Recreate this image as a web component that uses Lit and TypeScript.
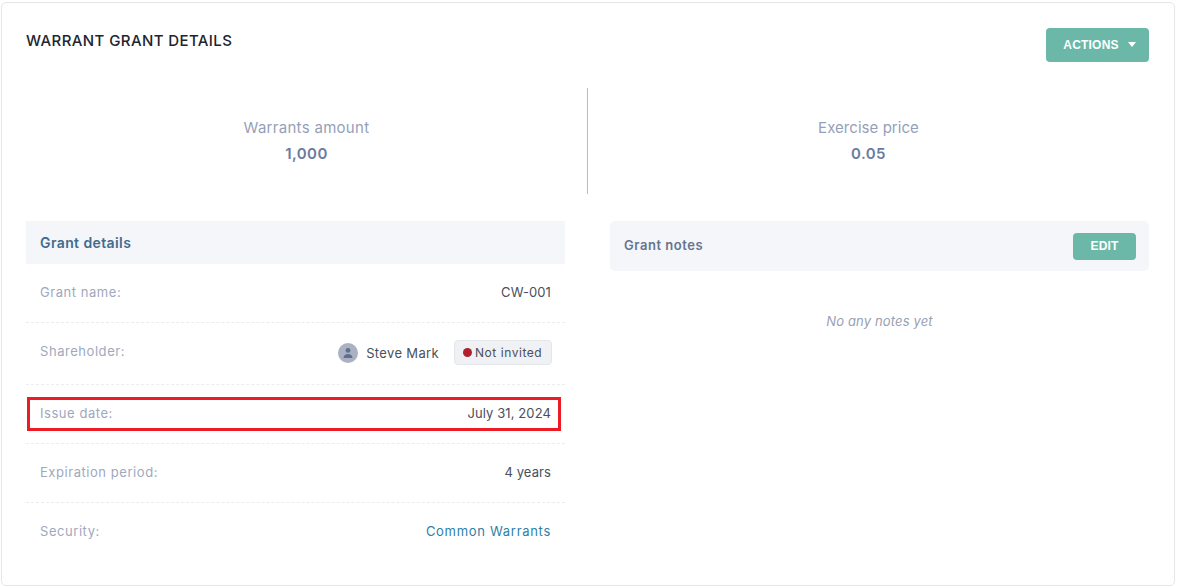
import { LitElement, html, css } from "lit";
import { customElement } from "lit/decorators.js";

@customElement("app-root")
export class AppRoot extends LitElement {
  static styles = css`
    :host { display: block; height: 587px; box-sizing: border-box; padding: 2px 2px 1px 1px; background: #fff;
      font-family: Inter, "Liberation Sans", sans-serif; font-size: 13px; color: #4a4f5c; }
    .card { box-sizing: border-box; width: 1174px; height: 584px; border: 1px solid #e4e6e9; border-radius: 5px; padding: 25px 25px 0 24px; background: #fff; }
    .head { display: flex; justify-content: space-between; align-items: flex-start; height: 60px; }
    h1 { margin: 4px 0 0 0; font-size: 15px; line-height: 18px; font-weight: 500; color: #20242e; letter-spacing: 0.4px; }
    .btn { border: 0; background: #6bb8a9; color: #fff; border-radius: 4px; font-family: "Liberation Sans", sans-serif; font-weight: 700; font-size: 12px; letter-spacing: 0.2px; display: flex; align-items: center; justify-content: center; padding: 0; }
    .actions { width: 103px; height: 34px; gap: 9px; padding-left: 4px; }
    .caret { width: 0; height: 0; border-left: 4.5px solid transparent; border-right: 4.5px solid transparent; border-top: 5px solid #fff; margin-top: -2px; }
    .stats { display: grid; grid-template-columns: 561px 1fr; height: 106px; }
    .stat { display: flex; flex-direction: column; align-items: center; padding-top: 31px; gap: 8px; }
    .stat + .stat { border-left: 1px solid #b8bdc4; }
    .stat .k { font-size: 15px; line-height: 18px; letter-spacing: 0.3px; color: #959fb8; }
    .stat + .stat .k { letter-spacing: 0.05px; }
    .stat .v { font-size: 15px; line-height: 18px; letter-spacing: 0.4px; font-weight: 600; color: #6b7b9f; }
    .cols { display: grid; grid-template-columns: 539px 539px; column-gap: 45px; margin-top: 27px; align-items: start; }
    .dh { height: 43px; box-sizing: border-box; padding: 0 0 1px 14px; background: #f4f6fa; display: flex; align-items: center; font-size: 14px; letter-spacing: 0.4px; font-weight: 600; color: #3f6d8e; }
    .row { position: relative; display: flex; justify-content: space-between; align-items: center; padding: 0 14px 2px; box-sizing: content-box; height: 56px; border-bottom: 1px dashed #ebecef; font-size: 13px; }
    .row.tall { height: 56px; padding-bottom: 5px; }
    .row.last { border-bottom: 0; }
    .lab { color: #a0a8bd; letter-spacing: 0.55px; }
    .val { color: #4a4f5c; letter-spacing: 0.1px; }
    .link { color: #2f7fa8; letter-spacing: 0.7px; }
    .who { display: flex; align-items: center; margin: 3px -1px 0 0; }
    .avatar { width: 20px; height: 20px; border-radius: 50%; background: #a9b1c3; display: flex; align-items: center; justify-content: center; margin-right: 8px; }
    .name { margin-right: 15px; letter-spacing: 0.35px; }
    .badge { display: flex; align-items: center; gap: 3px; height: 25px; box-sizing: border-box; width: 98px; padding-left: 8px; background: #f0f1f4; border: 1px solid #e4e6ea; border-radius: 4px; font-size: 12px; letter-spacing: 0.55px; }
    .dot { width: 9px; height: 9px; border-radius: 50%; background: #b0202a; }
    .mark { position: absolute; left: 1px; right: 4px; top: 12px; height: 34px; box-sizing: border-box; border: 3px solid #ed1c24; }
    .nh { height: 50px; background: #f4f6fa; border-radius: 5px; display: flex; justify-content: space-between; align-items: center; padding: 0 13px 0 14px; font-weight: 600; letter-spacing: 0.55px; color: #66748f; }
    .nh > span { margin-top: -2px; }
    .edit { width: 63px; height: 27px; }
    .empty { text-align: center; margin-top: 41px; line-height: 18px; font-style: italic; letter-spacing: 0.15px; color: #98a1b5; }
  `;

  render() {
    return html`
      <div class="card">
        <div class="head">
          <h1>WARRANT GRANT DETAILS</h1>
          <button class="btn actions">ACTIONS <span class="caret"></span></button>
        </div>
        <div class="stats">
          <div class="stat"><span class="k">Warrants amount</span><span class="v">1,000</span></div>
          <div class="stat"><span class="k">Exercise price</span><span class="v">0.05</span></div>
        </div>
        <div class="cols">
          <section>
            <div class="dh">Grant details</div>
            <div class="row"><span class="lab">Grant name:</span><span class="val">CW-001</span></div>
            <div class="row tall"><span class="lab">Shareholder:</span>
              <span class="who">
                <span class="avatar"><svg width="12" height="12" viewBox="0 0 12 12"><circle cx="6" cy="3.4" r="2.4" fill="#5f6f8f"/><path d="M1.5 11c0-2.8 2-4 4.5-4s4.500 1.200 4.500 4z" fill="#5f6f8f"/></svg></span>
                <span class="name val">Steve Mark</span>
                <span class="badge val"><span class="dot"></span>Not invited</span>
              </span>
            </div>
            <div class="row"><span class="lab">Issue date:</span><span class="val">July 31, 2024</span><span class="mark"></span></div>
            <div class="row"><span class="lab">Expiration period:</span><span class="val">4 years</span></div>
            <div class="row last"><span class="lab">Security:</span><span class="link">Common Warrants</span></div>
          </section>
          <section>
            <div class="nh"><span>Grant notes</span><button class="btn edit">EDIT</button></div>
            <div class="empty">No any notes yet</div>
          </section>
        </div>
      </div>
    `;
  }
}
